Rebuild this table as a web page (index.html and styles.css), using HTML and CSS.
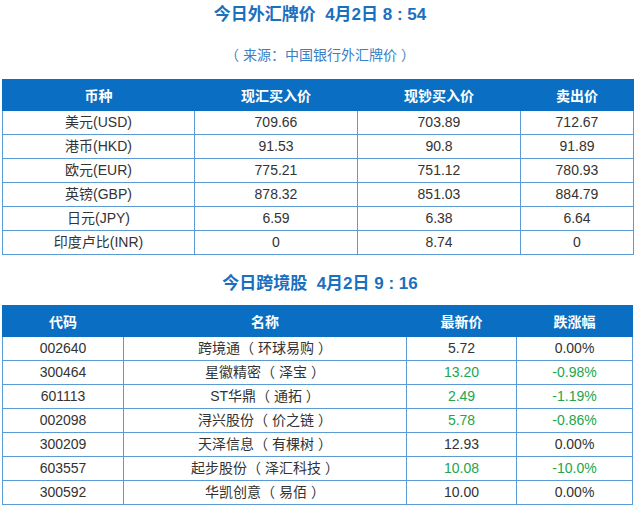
FILE: index.html
```html
<!DOCTYPE html>
<html lang="zh">
<head>
<meta charset="utf-8">
<link rel="stylesheet" href="styles.css">
</head>
<body>
<div class="page">
  <h1 class="title">今日外汇牌价&nbsp;&nbsp;4月2日 8 : 54</h1>
  <p class="source">（ 来源：中国银行外汇牌价 ）</p>
  <table class="grid fx">
    <colgroup><col class="c1"><col class="c2"><col class="c3"><col class="c4"></colgroup>
    <thead><tr><th>币种</th><th>现汇买入价</th><th>现钞买入价</th><th>卖出价</th></tr></thead>
    <tbody>
      <tr><td>美元(USD)</td><td>709.66</td><td>703.89</td><td>712.67</td></tr>
      <tr><td>港币(HKD)</td><td>91.53</td><td>90.8</td><td>91.89</td></tr>
      <tr><td>欧元(EUR)</td><td>775.21</td><td>751.12</td><td>780.93</td></tr>
      <tr><td>英镑(GBP)</td><td>878.32</td><td>851.03</td><td>884.79</td></tr>
      <tr><td>日元(JPY)</td><td>6.59</td><td>6.38</td><td>6.64</td></tr>
      <tr><td>印度卢比(INR)</td><td>0</td><td>8.74</td><td>0</td></tr>
    </tbody>
  </table>
  <h2 class="title title2">今日跨境股&nbsp;&nbsp;4月2日 9 : 16</h2>
  <table class="grid stock">
    <colgroup><col class="s1"><col class="s2"><col class="s3"><col class="s4"></colgroup>
    <thead><tr><th>代码</th><th>名称</th><th>最新价</th><th>跌涨幅</th></tr></thead>
    <tbody>
      <tr><td>002640</td><td>跨境通（ 环球易购 ）</td><td>5.72</td><td>0.00%</td></tr>
      <tr><td>300464</td><td>星徽精密（ 泽宝 ）</td><td class="down">13.20</td><td class="down">-0.98%</td></tr>
      <tr><td>601113</td><td>ST华鼎（ 通拓 ）</td><td class="down">2.49</td><td class="down">-1.19%</td></tr>
      <tr><td>002098</td><td>浔兴股份（ 价之链 ）</td><td class="down">5.78</td><td class="down">-0.86%</td></tr>
      <tr><td>300209</td><td>天泽信息（ 有棵树 ）</td><td>12.93</td><td>0.00%</td></tr>
      <tr><td>603557</td><td>起步股份（ 泽汇科技 ）</td><td class="down">10.08</td><td class="down">-10.0%</td></tr>
      <tr><td>300592</td><td>华凯创意（ 易佰 ）</td><td>10.00</td><td>0.00%</td></tr>
    </tbody>
  </table>
</div>
</body>
</html>
```

FILE: styles.css
```css
html, body {
  margin: 0;
  padding: 0;
  background: #ffffff;
}
body {
  font-family: "Liberation Sans", "Noto Sans CJK SC", sans-serif;
  color: #333333;
  font-size: 14px;
}
.page {
  width: 640px;
  padding: 0 0 0 2px;
  box-sizing: border-box;
}
.title {
  margin: 0;
  text-align: center;
  font-size: 17px;
  font-weight: bold;
  line-height: 30px;
  height: 30px;
  color: #1a6fbf;
  padding-right: 2px;
}
.source {
  margin: 15px 0 14px;
  text-align: center;
  font-size: 14px;
  line-height: 20px;
  color: #3b7fc4;
  padding-right: 2px;
}
.title2 {
  margin: 14px 0 6px;
}
.grid {
  border-collapse: collapse;
  table-layout: fixed;
  border: 1px solid #5b9bd5;
}
.grid th {
  background: #0a6fc2;
  color: #ffffff;
  font-weight: bold;
  font-size: 14px;
  height: 30px;
  padding: 0;
  border: 1px solid #0a6fc2;
  text-align: center;
}
.grid td {
  height: 23px;
  padding: 0;
  border: 1px solid #5b9bd5;
  text-align: center;
  line-height: 23px;
  color: #333333;
}
.grid td.down {
  color: #22a54c;
}
.fx { width: 631px; }
.c1 { width: 192px; }
.c2 { width: 163px; }
.c3 { width: 163px; }
.c4 { width: 113px; }
.stock { width: 630px; }
.s1 { width: 121px; }
.s2 { width: 283px; }
.s3 { width: 110px; }
.s4 { width: 116px; }
```
